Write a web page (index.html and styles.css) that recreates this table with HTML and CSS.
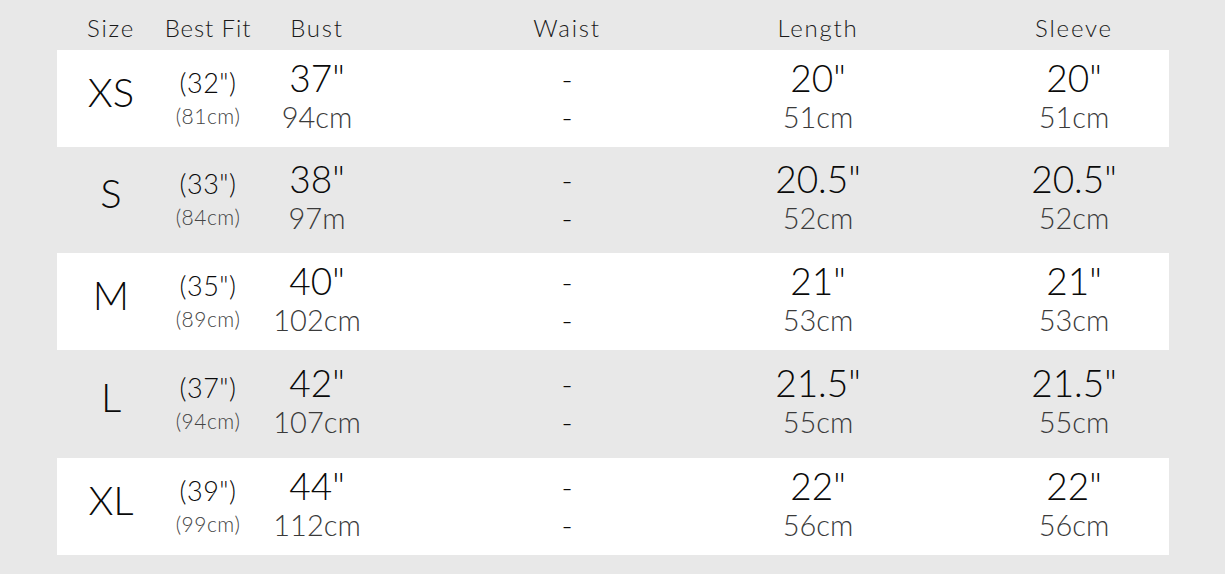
FILE: index.html
```html
<!DOCTYPE html>
<html>
<head>
<meta charset="utf-8">
<link rel="stylesheet" href="styles.css">
</head>
<body>
<div class="chart">
  <div class="grid head">
    <div class="c">Size</div>
    <div class="c fit-h">Best Fit</div>
    <div class="c">Bust</div>
    <div class="c">Waist</div>
    <div class="c">Length</div>
    <div class="c sleeve">Sleeve</div>
  </div>

  <div class="grid row white">
    <div class="c size">XS</div>
    <div class="c fit"><span class="a">(32")</span><span class="b">(81cm)</span></div>
    <div class="c val"><span class="a">37"</span><span class="b">94cm</span></div>
    <div class="c dash"><span>-</span><span>-</span></div>
    <div class="c val"><span class="a">20"</span><span class="b">51cm</span></div>
    <div class="c val sleeve"><span class="a">20"</span><span class="b">51cm</span></div>
  </div>

  <div class="grid row gray">
    <div class="c size">S</div>
    <div class="c fit"><span class="a">(33")</span><span class="b">(84cm)</span></div>
    <div class="c val"><span class="a">38"</span><span class="b">97m</span></div>
    <div class="c dash"><span>-</span><span>-</span></div>
    <div class="c val"><span class="a">20.5"</span><span class="b">52cm</span></div>
    <div class="c val sleeve"><span class="a">20.5"</span><span class="b">52cm</span></div>
  </div>

  <div class="grid row white">
    <div class="c size">M</div>
    <div class="c fit"><span class="a">(35")</span><span class="b">(89cm)</span></div>
    <div class="c val"><span class="a">40"</span><span class="b">102cm</span></div>
    <div class="c dash"><span>-</span><span>-</span></div>
    <div class="c val"><span class="a">21"</span><span class="b">53cm</span></div>
    <div class="c val sleeve"><span class="a">21"</span><span class="b">53cm</span></div>
  </div>

  <div class="grid row gray tall">
    <div class="c size">L</div>
    <div class="c fit"><span class="a">(37")</span><span class="b">(94cm)</span></div>
    <div class="c val"><span class="a">42"</span><span class="b">107cm</span></div>
    <div class="c dash"><span>-</span><span>-</span></div>
    <div class="c val"><span class="a">21.5"</span><span class="b">55cm</span></div>
    <div class="c val sleeve"><span class="a">21.5"</span><span class="b">55cm</span></div>
  </div>

  <div class="grid row white">
    <div class="c size">XL</div>
    <div class="c fit"><span class="a">(39")</span><span class="b">(99cm)</span></div>
    <div class="c val"><span class="a">44"</span><span class="b">112cm</span></div>
    <div class="c dash"><span>-</span><span>-</span></div>
    <div class="c val"><span class="a">22"</span><span class="b">56cm</span></div>
    <div class="c val sleeve"><span class="a">22"</span><span class="b">56cm</span></div>
  </div>
</div>
</body>
</html>
```

FILE: styles.css
```css
html, body {
  margin: 0;
  padding: 0;
  background: #e8e8e8;
}
body {
  font-family: "Lato", "DejaVu Sans", sans-serif;
  font-weight: 300;
  color: #0a0a0a;
}
.chart {
  width: 1112px;
  margin-left: 57px;
}
.grid {
  display: grid;
  grid-template-columns: 108px 86px 132px 368px 134px 284px;
  grid-template-rows: 1fr;
}
.c {
  display: flex;
  flex-direction: column;
  align-items: center;
  justify-content: center;
  text-align: center;
  white-space: nowrap;
  min-width: 0;
}
.sleeve {
  padding-left: 94px;
}
.head {
  height: 50px;
  font-size: 24px;
  color: #1a1a1a;
  letter-spacing: 1.8px;
}
.head .c {
  padding-top: 4px;
}
.head .fit-h {
  letter-spacing: 0.9px;
}
.row {
  height: 97px;
}
.row.gray {
  height: 106px;
}
.row.tall {
  height: 108px;
}
.white {
  background: #fff;
}
.size {
  font-size: 40px;
  padding-bottom: 14px;
}
.fit {
  padding-bottom: 2px;
}
.fit .a {
  font-size: 27px;
  line-height: 36px;
  letter-spacing: 0.5px;
}
.fit .b {
  font-size: 21px;
  line-height: 30px;
  letter-spacing: 0.5px;
  color: #444;
}
.val {
  padding-bottom: 4px;
}
.val .a {
  font-size: 37px;
  line-height: 40px;
}
.val .b {
  font-size: 29px;
  line-height: 38px;
  color: #3a3a3a;
}
.dash {
  padding-bottom: 4px;
}
.dash span {
  font-size: 30px;
  line-height: 38px;
}
```
